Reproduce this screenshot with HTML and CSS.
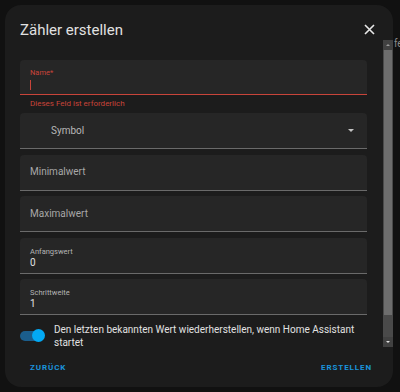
FILE: index.html
```html
<!DOCTYPE html>
<html lang="de">
<head>
    <meta charset="UTF-8">
    <meta name="viewport" content="width=device-width, initial-scale=1.0">
    <title>Zähler erstellen</title>
    <link rel="stylesheet" href="styles.css">
</head>
<body>
    <div class="backdrop-text">fe</div>

    <div class="dialog">
        <div class="dialog-header">
            <h2>Zähler erstellen</h2>
            <button class="close-btn" aria-label="Schließen">
                <svg width="11" height="11" viewBox="0 0 11 11">
                    <path d="M1 1 L10 10 M10 1 L1 10" stroke="#e8e8e8" stroke-width="1.6" fill="none"/>
                </svg>
            </button>
        </div>

        <div class="dialog-content">
            <div class="field field-error">
                <span class="field-label">Name*</span>
                <span class="caret"></span>
            </div>
            <div class="helper-text">Dieses Feld ist erforderlich</div>

            <div class="field field-select">
                <span class="placeholder">Symbol</span>
                <span class="select-arrow"></span>
            </div>

            <div class="field">
                <span class="placeholder">Minimalwert</span>
            </div>

            <div class="field">
                <span class="placeholder">Maximalwert</span>
            </div>

            <div class="field field-filled">
                <span class="field-label">Anfangswert</span>
                <span class="field-value">0</span>
            </div>

            <div class="field field-filled">
                <span class="field-label">Schrittweite</span>
                <span class="field-value">1</span>
            </div>

            <div class="switch-row">
                <div class="switch">
                    <div class="switch-knob"></div>
                </div>
                <p>Den letzten bekannten Wert wiederherstellen, wenn Home Assistant startet</p>
            </div>
        </div>

        <div class="dialog-actions">
            <button class="text-btn">Zurück</button>
            <button class="text-btn">Erstellen</button>
        </div>

        <div class="scrollbar">
            <div class="scroll-up"></div>
            <div class="scroll-thumb"></div>
            <div class="scroll-track"></div>
            <div class="scroll-down"></div>
        </div>
    </div>
</body>
</html>
```

FILE: styles.css
```css
:root {
    --bg-color: #111111;
    --dialog-bg: #1c1c1c;
    --field-bg: #262626;
    --field-line: #6a6a6a;
    --error-color: #c8443a;
    --primary-color: #1a94dc;
    --text-color: #e1e1e1;
    --muted-color: #a8a8a8;
}

* {
    margin: 0;
    padding: 0;
    box-sizing: border-box;
}

body {
    background-color: var(--bg-color);
    color: var(--text-color);
    font-family: Roboto, "Noto Sans", sans-serif;
    width: 400px;
    height: 392px;
    overflow: hidden;
    position: relative;
}

.backdrop-text {
    position: absolute;
    left: 394px;
    top: 38px;
    font-size: 10px;
    color: #8a8a8a;
}

.dialog {
    position: relative;
    margin: 5px;
    width: 388px;
    height: 382px;
    background: var(--dialog-bg);
    border-radius: 16px;
    display: flex;
    flex-direction: column;
}

.dialog-header {
    display: flex;
    justify-content: space-between;
    align-items: flex-start;
    padding: 16px 18px 0 15px;
    height: 50px;
}

.dialog-header h2 {
    font-size: 15px;
    font-weight: 400;
    line-height: 18px;
    color: var(--text-color);
}

.close-btn {
    background: none;
    border: none;
    width: 11px;
    height: 11px;
    margin-top: 3px;
    display: flex;
    cursor: pointer;
}

.dialog-content {
    padding: 5px 26px 0 15px;
    display: flex;
    flex-direction: column;
}

.field {
    position: relative;
    height: 36px;
    background: var(--field-bg);
    border-radius: 4px 4px 0 0;
    border-bottom: 1px solid var(--field-line);
    padding: 0 10px;
    display: flex;
    flex-direction: column;
    justify-content: center;
    margin-bottom: 5.5px;
}

.field-error {
    height: 35px;
    border-bottom: 1.5px solid var(--error-color);
    justify-content: flex-start;
    padding-top: 8px;
    margin-bottom: 0;
}

.field-label {
    font-size: 7.5px;
    line-height: 9px;
    color: #b4b4b4;
}

.field-error .field-label {
    color: var(--error-color);
}

.caret {
    display: block;
    width: 1px;
    height: 10px;
    margin-top: 3px;
    background: var(--error-color);
}

.helper-text {
    font-size: 8px;
    line-height: 18px;
    color: var(--error-color);
    padding-left: 10px;
}

.placeholder {
    font-size: 10px;
    color: var(--muted-color);
    padding-bottom: 1px;
}

.field-select {
    flex-direction: row;
    align-items: center;
    justify-content: space-between;
    padding-left: 31px;
    padding-right: 13px;
}

.field-select .placeholder {
    color: #b8b8b8;
}

.select-arrow {
    width: 0;
    height: 0;
    border-left: 3.5px solid transparent;
    border-right: 3.5px solid transparent;
    border-top: 3.5px solid #c4c4c4;
}

.field-filled {
    justify-content: flex-start;
    padding-top: 9px;
}

.field-value {
    font-size: 10px;
    line-height: 12px;
    margin-top: 1px;
    color: var(--text-color);
}

.switch-row {
    display: flex;
    align-items: center;
    gap: 13px;
    margin-top: 2.5px;
}

.switch {
    position: relative;
    flex-shrink: 0;
    width: 21px;
    height: 10px;
    border-radius: 5px;
    background: #1b5e8c;
}

.switch-knob {
    position: absolute;
    right: -4px;
    top: -2px;
    width: 13px;
    height: 13px;
    border-radius: 50%;
    background: #03a9f4;
}

.switch-row p {
    font-size: 10px;
    line-height: 13px;
    color: var(--text-color);
}

.dialog-actions {
    margin-top: auto;
    display: flex;
    justify-content: space-between;
    padding: 0 11px 13px 15px;
}

.text-btn {
    background: none;
    border: none;
    font-family: Roboto, "Noto Sans", sans-serif;
    font-size: 8px;
    font-weight: 700;
    letter-spacing: 0.9px;
    text-transform: uppercase;
    color: var(--primary-color);
    padding: 0 10px;
    line-height: 12px;
    cursor: pointer;
}

.scrollbar {
    position: absolute;
    left: 378px;
    top: 35px;
    width: 10px;
    height: 307px;
    display: flex;
    flex-direction: column;
    background: #4a4a4a;
}

.scroll-up,
.scroll-down {
    height: 10px;
    background: #414141;
    position: relative;
}

.scroll-up::after,
.scroll-down::after {
    content: "";
    position: absolute;
    left: 2.5px;
    top: 4px;
    border-left: 2.5px solid transparent;
    border-right: 2.5px solid transparent;
}

.scroll-up::after {
    border-bottom: 2.5px solid #9a9a9a;
}

.scroll-down::after {
    border-top: 2.5px solid #e0e0e0;
}

.scroll-thumb {
    height: 265px;
    margin: 0 1px;
    background: #6d6d6d;
}

.scroll-track {
    flex: 1;
}
```
